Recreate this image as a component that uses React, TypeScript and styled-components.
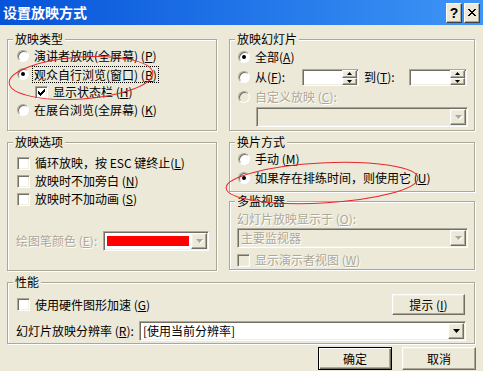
import React from 'react';
import styled, { createGlobalStyle, css } from 'styled-components';

const GlobalStyle = createGlobalStyle`
  html, body {
    margin: 0;
    padding: 0;
    background: #ece9d8;
  }
  body {
    font-family: "Noto Sans CJK SC", "Liberation Sans", sans-serif;
    font-size: 12px;
    color: #000;
  }
`;

const sunken = css`
  border: 1px solid;
  border-color: #aca899 #fff #fff #aca899;
  box-shadow: inset 1px 1px 0 #716f64, inset -1px -1px 0 #f1efe2;
`;

const raised = css`
  border: 1px solid;
  border-color: #fff #716f64 #716f64 #fff;
  box-shadow: inset -1px -1px 0 #aca899, inset 1px 1px 0 #f1efe2;
`;

const Dialog = styled.div`
  position: relative;
  width: 483px;
  height: 371px;
  overflow: hidden;
  background: #ece9d8;
  display: flex;
  flex-direction: column;
`;

const TitleBar = styled.div`
  flex: none;
  height: 25px;
  background: linear-gradient(to right, #0553d9, #3e95f6);
  display: flex;
  align-items: center;
  padding: 0 3px 0 3px;
`;

const Title = styled.div`
  flex: 1;
  color: #fff;
  font-weight: bold;
  font-size: 14px;
  line-height: 25px;
`;

const CaptionButton = styled.div`
  box-sizing: border-box;
  width: 16px;
  height: 20px;
  margin-left: 2px;
  background: #ece9d8;
  border: 1px solid;
  border-color: #fff #404040 #404040 #fff;
  box-shadow: inset -1px -1px 0 #aca899;
  display: flex;
  align-items: center;
  justify-content: center;
  font-family: "Liberation Sans", sans-serif;
  font-weight: bold;
  font-size: 14px;
`;

const Body = styled.div`
  flex: 1;
  padding: 14px 7px 0;
  display: flex;
  flex-direction: column;
`;

const Columns = styled.div<{ $h: number; $mb: number }>`
  display: grid;
  grid-template-columns: 211px 247px;
  column-gap: 11px;
  height: ${p => p.$h}px;
  margin-bottom: ${p => p.$mb}px;
`;

const Stack = styled.div`
  display: flex;
  flex-direction: column;
  gap: 9px;
`;

const Group = styled.div<{ $h: number; $pad: string }>`
  position: relative;
  box-sizing: border-box;
  height: ${p => p.$h - 1}px;
  width: calc(100% - 1px);
  border: 1px solid #aca899;
  box-shadow: 1px 1px 0 #fff, inset 1px 1px 0 #fff;
  padding: ${p => p.$pad};
  display: flex;
  flex-direction: column;
`;

const Legend = styled.span`
  position: absolute;
  top: -8px;
  left: 5px;
  padding: 0 2px;
  background: #ece9d8;
  line-height: 14px;
`;

const Row = styled.div<{ $indent?: number; $gap?: number; $h?: number }>`
  display: flex;
  align-items: center;
  height: ${p => p.$h ?? 18}px;
  margin-left: ${p => p.$indent ?? 0}px;
  margin-bottom: ${p => p.$gap ?? 0}px;
  white-space: nowrap;
`;

const Text = styled.span<{ $disabled?: boolean; $w?: number }>`
  line-height: 16px;
  ${p => p.$w && `width: ${p.$w}px; flex: none;`}
  ${p =>
    p.$disabled &&
    css`
      color: #aca899;
      text-shadow: 1px 1px 0 #fff;
    `}
`;

const Focus = styled.span`
  outline: 1px dotted #000;
  outline-offset: 0;
  padding: 0 1px;
  margin-left: -1px;
  line-height: 15px;
`;

const Radio = styled.span<{ $checked?: boolean; $disabled?: boolean }>`
  flex: none;
  box-sizing: border-box;
  width: 12px;
  height: 12px;
  margin-right: 5px;
  border-radius: 50%;
  border: 1px solid;
  border-color: #aca899 #fff #fff #aca899;
  box-shadow: inset 1px 1px 0 #716f64;
  background: ${p => (p.$disabled ? '#ece9d8' : '#fff')};
  display: flex;
  align-items: center;
  justify-content: center;
  &::after {
    content: '';
    display: ${p => (p.$checked ? 'block' : 'none')};
    width: 4px;
    height: 4px;
    border-radius: 50%;
    background: #000;
  }
`;

const Box = styled.span<{ $disabled?: boolean }>`
  flex: none;
  box-sizing: border-box;
  width: 13px;
  height: 13px;
  margin-right: 5px;
  ${sunken}
  background: ${p => (p.$disabled ? '#ece9d8' : '#fff')};
  display: flex;
  align-items: center;
  justify-content: center;
`;

const Check = ({ checked, disabled }: { checked?: boolean; disabled?: boolean }) => (
  <Box $disabled={disabled}>
    {checked && (
      <svg width="7" height="7" viewBox="0 0 7 7" shapeRendering="crispEdges">
        <path d="M0 2h1v1h1v1h1v-1h1v-1h1v-1h1v-1h1v3h-1v1h-1v1h-1v1h-1v1h-1v-1h-1v-1h-1z" fill="#000" />
      </svg>
    )}
  </Box>
);

const Field = styled.div<{ $w?: number; $h?: number; $disabled?: boolean; $ml?: number }>`
  box-sizing: border-box;
  ${sunken}
  height: ${p => p.$h ?? 20}px;
  ${p => (p.$w ? `width: ${p.$w}px; flex: none;` : 'flex: 1;')}
  margin-left: ${p => p.$ml ?? 0}px;
  background: ${p => (p.$disabled ? '#ece9d8' : '#fff')};
  padding: 1px;
  display: flex;
  align-items: center;
`;

const FieldText = styled(Text)`
  flex: 1;
  padding-left: 2px;
`;

const ArrowButton = styled.span`
  flex: none;
  box-sizing: border-box;
  width: 16px;
  height: 16px;
  background: #ece9d8;
  ${raised}
  display: flex;
  align-items: center;
  justify-content: center;
`;

const SpinColumn = styled.span`
  flex: none;
  margin-left: auto;
  display: flex;
  flex-direction: column;
`;

const SpinButton = styled.span<{ $h: number }>`
  box-sizing: border-box;
  width: 15px;
  height: ${p => p.$h}px;
  background: #ece9d8;
  ${raised}
  display: flex;
  align-items: center;
  justify-content: center;
`;

const Swatch = styled.span<{ $color: string }>`
  flex: none;
  width: 82px;
  height: 10px;
  margin: 0 2px;
  background: ${p => p.$color};
`;

const Arrow = ({ disabled, up, small }: { disabled?: boolean; up?: boolean; small?: boolean }) => {
  const w = small ? 5 : 7;
  const h = small ? 3 : 4;
  const pts = up ? `0,${h} ${w},${h} ${w / 2},0` : `0,0 ${w},0 ${w / 2},${h}`;
  return (
    <svg width={w} height={h} viewBox={`0 0 ${w} ${h}`} style={{ overflow: 'visible' }}>
      {disabled && <polygon points={pts} fill="#fff" transform="translate(1 1)" />}
      <polygon points={pts} fill={disabled ? '#aca899' : '#000'} />
    </svg>
  );
};

const Select = ({ w, text, disabled, ml }: { w?: number; text?: string; disabled?: boolean; ml?: number }) => (
  <Field $w={w} $disabled={disabled} $ml={ml}>
    <FieldText $disabled={disabled}>{text}</FieldText>
    <ArrowButton>
      <Arrow disabled={disabled} />
    </ArrowButton>
  </Field>
);

const Spinner = ({ w }: { w: number }) => (
  <Field $w={w} $h={17}>
    <SpinColumn>
      <SpinButton $h={8}>
        <Arrow up small />
      </SpinButton>
      <SpinButton $h={7}>
        <Arrow small />
      </SpinButton>
    </SpinColumn>
  </Field>
);

const Spacer = styled.span`
  flex: 1;
`;

const PushButton = styled.div<{ $default?: boolean; $w: number; $h: number; $mr?: number }>`
  flex: none;
  box-sizing: border-box;
  width: ${p => p.$w}px;
  height: ${p => p.$h}px;
  margin-right: ${p => p.$mr ?? 0}px;
  background: #ece9d8;
  display: flex;
  align-items: center;
  justify-content: center;
  line-height: 16px;
  ${p =>
    p.$default
      ? css`
          border: 1px solid #000;
          box-shadow: inset 1px 1px 0 #fff, inset -1px -1px 0 #716f64, inset -2px -2px 0 #aca899;
        `
      : raised}
`;

const ButtonBar = styled.div`
  display: flex;
  justify-content: flex-end;
  gap: 10px;
  margin-top: 3px;
`;

const Annotations = styled.svg`
  position: absolute;
  left: 0;
  top: 0;
  pointer-events: none;
`;

const K = ({ k }: { k: string }) => (
  <>
    (<u>{k}</u>)
  </>
);

export default function App() {
  return (
    <>
      <GlobalStyle />
      <Dialog>
        <TitleBar>
          <Title>设置放映方式</Title>
          <CaptionButton>?</CaptionButton>
          <CaptionButton>
            <svg width="8" height="7" viewBox="0 0 8 7" shapeRendering="crispEdges">
              <path d="M0 0h2v1h1v1h2v-1h1v-1h2v1h-1v1h-1v1h-1v1h1v1h1v1h1v1h-2v-1h-1v-1h-2v1h-1v1h-2v-1h1v-1h1v-1h1v-1h-1v-1h-1v-1h-1z" fill="#000" />
            </svg>
          </CaptionButton>
        </TitleBar>

        <Body>
          <Columns $h={93} $mb={10}>
            <Group $h={93} $pad="7px 0 0 9px">
              <Legend>放映类型</Legend>
              <Row>
                <Radio />
                <Text>演讲者放映(全屏幕) <K k="P" /></Text>
              </Row>
              <Row>
                <Radio $checked />
                <Focus>观众自行浏览(窗口) <K k="B" /></Focus>
              </Row>
              <Row $indent={18}>
                <Check checked />
                <Text>显示状态栏 <K k="H" /></Text>
              </Row>
              <Row>
                <Radio />
                <Text>在展台浏览(全屏幕) <K k="K" /></Text>
              </Row>
            </Group>

            <Group $h={93} $pad="8px 8px 0 8px">
              <Legend>放映幻灯片</Legend>
              <Row $gap={2}>
                <Radio $checked />
                <Text>全部<K k="A" /></Text>
              </Row>
              <Row $gap={2}>
                <Radio />
                <Text $w={47}>从<K k="F" />:</Text>
                <Spinner w={57} />
                <Text $w={45} style={{ marginLeft: 5 }}>到<K k="T" />:</Text>
                <Spinner w={58} />
              </Row>
              <Row $gap={1}>
                <Radio $disabled />
                <Text $disabled>自定义放映 <K k="C" />:</Text>
              </Row>
              <Row $h={20}>
                <Select w={212} ml={18} disabled />
              </Row>
            </Group>
          </Columns>

          <Columns $h={130} $mb={10}>
            <Group $h={130} $pad="11px 0 0 9px">
              <Legend>放映选项</Legend>
              <Row>
                <Check />
                <Text>循环放映，按 ESC 键终止<K k="L" /></Text>
              </Row>
              <Row>
                <Check />
                <Text>放映时不加旁白 <K k="N" /></Text>
              </Row>
              <Row $gap={23}>
                <Check />
                <Text>放映时不加动画 <K k="S" /></Text>
              </Row>
              <Row $h={20} $indent={-1}>
                <Text $disabled $w={87}>绘图笔颜色 <K k="E" />:</Text>
                <Field $w={106}>
                  <Swatch $color="#ff0000" />
                  <ArrowButton>
                    <Arrow disabled />
                  </ArrowButton>
                </Field>
              </Row>
            </Group>

            <Stack>
              <Group $h={51} $pad="7px 0 0 8px">
                <Legend>换片方式</Legend>
                <Row $gap={1}>
                  <Radio />
                  <Text>手动 <K k="M" /></Text>
                </Row>
                <Row>
                  <Radio $checked />
                  <Text>如果存在排练时间，则使用它 <K k="U" /></Text>
                </Row>
              </Group>

              <Group $h={70} $pad="8px 8px 0 7px">
                <Legend>多监视器</Legend>
                <Row>
                  <Text $disabled>幻灯片放映显示于 <K k="O" />:</Text>
                </Row>
                <Row $h={20} $gap={3}>
                  <Select w={231} text="主要监视器" disabled />
                </Row>
                <Row>
                  <Check disabled />
                  <Text $disabled>显示演示者视图 <K k="W" /></Text>
                </Row>
              </Group>
            </Stack>
          </Columns>

          <Group $h={63} $pad="11px 8px 0 9px">
            <Legend>性能</Legend>
            <Row $h={21} $gap={6}>
              <Check />
              <Text>使用硬件图形加速 <K k="G" /></Text>
              <Spacer />
              <PushButton $w={73} $h={21} $mr={1}>
                提示 <K k="I" />
              </PushButton>
            </Row>
            <Row $h={20} $indent={-1}>
              <Text $w={123}>幻灯片放映分辨率 <K k="R" />:</Text>
              <Select text="[使用当前分辨率]" />
            </Row>
          </Group>

          <ButtonBar>
            <PushButton $default $w={74} $h={23}>
              确定
            </PushButton>
            <PushButton $w={74} $h={23}>
              取消
            </PushButton>
          </ButtonBar>
        </Body>

        <Annotations width="483" height="371" viewBox="0 0 483 371">
          <ellipse cx="81" cy="78" rx="72" ry="21" transform="rotate(-4 81 78)" fill="none" stroke="#e8262a" strokeWidth="1" />
          <ellipse cx="322" cy="183" rx="96" ry="20" transform="rotate(-3 322 183)" fill="none" stroke="#e8262a" strokeWidth="1" />
        </Annotations>
      </Dialog>
    </>
  );
}
